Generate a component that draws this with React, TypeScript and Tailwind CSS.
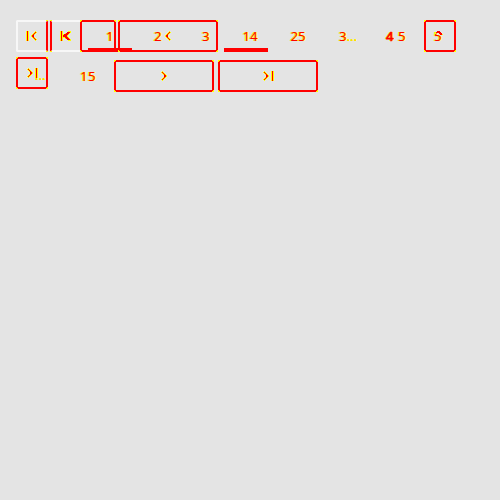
import React from "react";

const ink =
  "font-['Noto_Sans',sans-serif] text-[13px] leading-[16px] text-[#ff0000] [text-shadow:-1px_0_#ff0,1px_0_#ff0] whitespace-pre";

const dots =
  "font-['Noto_Sans',sans-serif] text-[13px] leading-[16px] text-[#ffd800] [text-shadow:0_0_#ff0,0_0_#ff0,0_0_#ff0] whitespace-pre";

function Corners() {
  return (
    <>
      <i className="absolute -left-[2px] -top-[2px] h-px w-[2px] bg-[#ffff00]" />
      <i className="absolute -left-[2px] -top-[2px] h-[2px] w-px bg-[#ffff00]" />
      <i className="absolute -right-[2px] -top-[2px] h-px w-[2px] bg-[#ffff00]" />
      <i className="absolute -right-[2px] -top-[2px] h-[2px] w-px bg-[#ffff00]" />
      <i className="absolute -left-[2px] -bottom-[2px] h-px w-[2px] bg-[#ffff00]" />
      <i className="absolute -left-[2px] -bottom-[2px] h-[2px] w-px bg-[#ffff00]" />
      <i className="absolute -right-[2px] -bottom-[2px] h-px w-[2px] bg-[#ffff00]" />
      <i className="absolute -right-[2px] -bottom-[2px] h-[2px] w-px bg-[#ffff00]" />
    </>
  );
}

function Frame({ className, children }: { className: string; children: React.ReactNode }) {
  return (
    <div className={`relative flex h-8 shrink-0 items-center rounded-[2px] border-2 border-[#ff0000] ${className}`}>
      <Corners />
      {children}
    </div>
  );
}

function Chevron({ left = false }: { left?: boolean }) {
  return (
    <svg width="6" height="10" viewBox="0 0 6 10" className={`shrink-0 ${left ? "-scale-x-100" : ""}`} shapeRendering="crispEdges">
      <path d="M0 1h1v-1h1v1h1v1h1v1h1v1h1v2h-1v1h-1v1h-1v1h-1v1h-1v-1h-1v-1h1v-1h1v-1h1v-2h-1v-1h-1v-1h-1z" fill="#ffff00" />
      <path d="M1 1h1v1h-1zM2 2h1v1h-1zM3 3h1v1h1v2h-1v1h-1zM2 7h1v1h-1zM1 8h1v1h-1z" fill="#ff0000" />
    </svg>
  );
}

function BoldFirst() {
  return (
    <svg width="12" height="10" viewBox="0 0 12 10" className="shrink-0" shapeRendering="crispEdges">
      <path d="M0 0h3v3h2v-1h2v-1h1v-1h3v2h-1v1h-1v1h-1v2h1v1h1v1h1v2h-3v-1h-1v-1h-2v-1h-2v3h-3z" fill="#ffff00" />
      <path d="M1 0h1v10h-1zM7 1h3v1h-1v1h-1v1h-1v2h1v1h1v1h1v1h-3v-1h-1v-1h-1v-1h-2v-2h1v-1h2v-1h1z" fill="#ff0000" />
    </svg>
  );
}

function Bar() {
  return <span className="h-[10px] w-[3px] shrink-0 border-x border-[#ffff00] bg-[#ff0000]" />;
}

export default function App() {
  return (
    <main className="h-[500px] w-[500px] overflow-hidden bg-[#e4e4e4] pl-4 pt-5">
      <div className="flex h-8">
        <div className="relative flex w-8 items-center rounded-[2px] border-2 border-r-[#ff0000] border-[#f7f7f7] pl-2">
          <i className="absolute -right-[2px] -top-[2px] h-[2px] w-[2px] border-t border-[#ffff00]" />
          <i className="absolute -bottom-[2px] -right-[2px] h-[2px] w-[2px] border-b border-[#ffff00]" />
          <Bar />
          <span className="ml-[2px]"><Chevron left /></span>
        </div>
        <div className="relative ml-[2px] flex w-[30px] items-center border-y-2 border-l-2 border-y-[#f7f7f7] border-l-[#ff0000] pl-2">
          <i className="absolute -left-[2px] -top-[2px] h-[2px] w-[2px] border-t border-[#ffff00]" />
          <i className="absolute -bottom-[2px] -left-[2px] h-[2px] w-[2px] border-b border-[#ffff00]" />
          <BoldFirst />
        </div>
        <Frame className="w-9">
          <span className={`${ink} ml-6`}>1</span>
          <i className="absolute -bottom-[2px] left-[6px] h-1 w-11 bg-[#ff0000]" />
        </Frame>
        <Frame className="ml-[2px] w-[100px]">
          <span className={`${ink} ml-[34px] w-[9px]`}>2</span>
          <span className="ml-[2px]"><Chevron left /></span>
          <span className={`${ink} ml-[31px]`}>3</span>
        </Frame>
        <div className="ml-[6px] flex w-11 items-center justify-center border-b-4 border-[#ff0000] pl-2 pt-1">
          <span className={ink}>14</span>
        </div>
        <div className="ml-1 flex w-11 items-center justify-center pl-2">
          <span className={ink}>25</span>
        </div>
        <div className="ml-1 flex w-11 items-center pl-[19px]">
          <span className={ink}>3<span className={dots}>...</span></span>
        </div>
        <div className="ml-1 flex w-11 items-center pl-[18px]">
          <span className={`${ink} w-[12px] [-webkit-text-stroke:0.7px_#f00]`}>4</span>
          <span className={ink}>5</span>
        </div>
        <Frame className="ml-3 w-8">
          <span className={`${ink} ml-2`}>5</span>
          <svg className="absolute left-[9px] top-[9px]" width="8" height="6" viewBox="0 0 8 6" shapeRendering="crispEdges">
            <path d="M2 0h3v1h1v1h1v2h-2v-1h-1v-1h-2z" fill="#ff0000" />
            <path d="M0 1h1v2h-1zM7 3h1v1h-1z" fill="#ffff00" />
          </svg>
        </Frame>
      </div>
      <div className="flex pt-[5px]">
        <Frame className="w-8">
          <span className="-mt-[1px] ml-[9px] flex"><Chevron /><span className="w-[2px]" /><Bar /></span>
          <span className={`${dots} -ml-[3px] mt-1`}>...</span>
        </Frame>
        <div className="mt-[3px] flex h-8 w-[66px] items-center pl-8">
          <span className={`${ink} w-[8px]`}>1</span>
          <span className={ink}>5</span>
        </div>
        <Frame className="mt-[3px] w-[100px] justify-center"><Chevron /></Frame>
        <Frame className="ml-1 mt-[3px] w-[100px] justify-center">
          <Chevron /><span className="w-[2px]" /><Bar />
        </Frame>
      </div>
    </main>
  );
}
